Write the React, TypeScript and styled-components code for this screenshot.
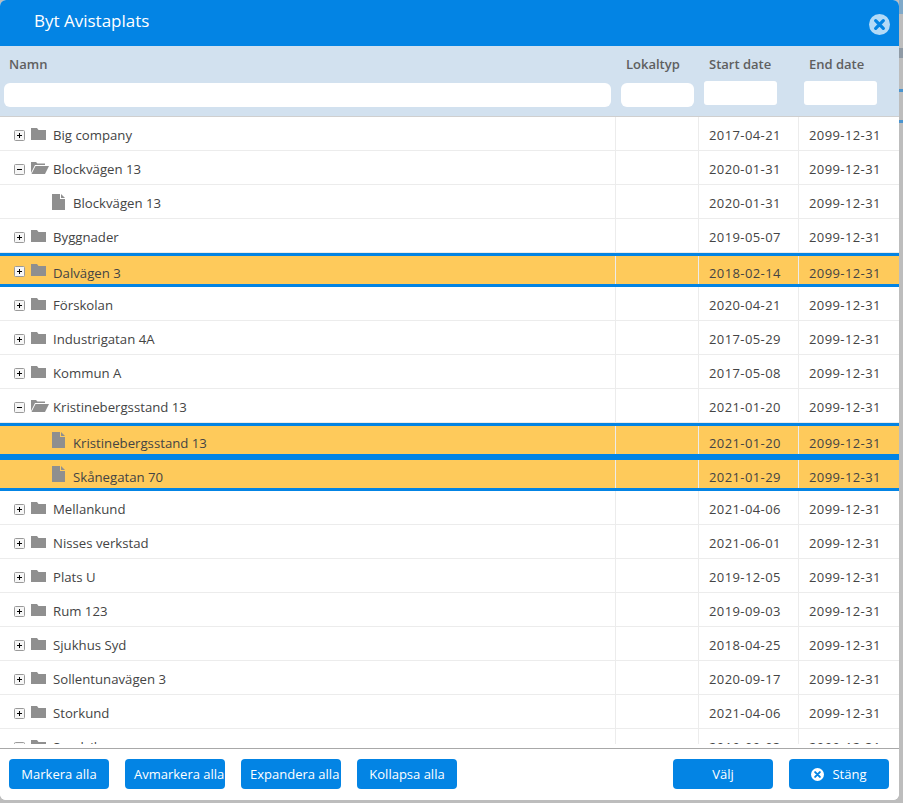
import styled, { createGlobalStyle } from "styled-components";

type Row = {
  name: string;
  start: string;
  kind: "closed" | "open" | "file";
  selected?: boolean;
};

const rows: Row[] = [
  { name: "Big company", start: "2017-04-21", kind: "closed" },
  { name: "Blockvägen 13", start: "2020-01-31", kind: "open" },
  { name: "Blockvägen 13", start: "2020-01-31", kind: "file" },
  { name: "Byggnader", start: "2019-05-07", kind: "closed" },
  { name: "Dalvägen 3", start: "2018-02-14", kind: "closed", selected: true },
  { name: "Förskolan", start: "2020-04-21", kind: "closed" },
  { name: "Industrigatan 4A", start: "2017-05-29", kind: "closed" },
  { name: "Kommun A", start: "2017-05-08", kind: "closed" },
  { name: "Kristinebergsstand 13", start: "2021-01-20", kind: "open" },
  { name: "Kristinebergsstand 13", start: "2021-01-20", kind: "file", selected: true },
  { name: "Skånegatan 70", start: "2021-01-29", kind: "file", selected: true },
  { name: "Mellankund", start: "2021-04-06", kind: "closed" },
  { name: "Nisses verkstad", start: "2021-06-01", kind: "closed" },
  { name: "Plats U", start: "2019-12-05", kind: "closed" },
  { name: "Rum 123", start: "2019-09-03", kind: "closed" },
  { name: "Sjukhus Syd", start: "2018-04-25", kind: "closed" },
  { name: "Sollentunavägen 3", start: "2020-09-17", kind: "closed" },
  { name: "Storkund", start: "2021-04-06", kind: "closed" },
  { name: "Sandviken", start: "2019-09-03", kind: "closed" },
];

const GlobalStyle = createGlobalStyle`
  html, body {
    margin: 0;
    padding: 0;
    height: 100%;
    overflow: hidden;
    background: #bdbdbd;
  }
  * {
    box-sizing: border-box;
  }
`;

// bits of the page underneath that show beside the dialog
const PageMark = styled.div<{ $top: number; $height: number; $color: string }>`
  position: fixed;
  left: 899px;
  right: 0;
  top: ${(p) => p.$top}px;
  height: ${(p) => p.$height}px;
  background: ${(p) => p.$color};
`;

const Dialog = styled.div`
  width: 899px;
  height: 800px;
  display: flex;
  flex-direction: column;
  background: #fff;
  border-radius: 6px;
  overflow: hidden;
  font-family: "Open Sans", "Noto Sans", sans-serif;
  font-size: 13px;
  color: #444;
`;

const TitleBar = styled.div`
  height: 46px;
  flex: none;
  display: flex;
  align-items: flex-start;
  justify-content: space-between;
  padding: 10px 9px 0 34px;
  background: #0384e4;
  color: #fff;
`;

const Title = styled.div`
  font-size: 17px;
  line-height: 21px;
`;

const CloseButton = styled.button`
  width: 21px;
  height: 21px;
  margin-top: 4px;
  padding: 0;
  border: 0;
  background: none;
  display: block;
`;

const FilterHeader = styled.div`
  height: 71px;
  flex: none;
  display: grid;
  grid-template-columns: 615px 83px 100px 101px;
  background: #d2e1ef;
  border-bottom: 1px solid #cfcfcf;
`;

const FilterCell = styled.div<{ $raised?: boolean; $indent?: number }>`
  padding: 9px 0 0 ${(p) => p.$indent ?? 11}px;
  display: flex;
  flex-direction: column;
  align-items: flex-start;
  gap: ${(p) => (p.$raised ? "8px" : "10px")};
`;

const ColumnLabel = styled.div`
  font-weight: 600;
  font-size: 13px;
  line-height: 18px;
  color: #5f5f5f;
`;

const FilterInput = styled.input<{ $width: number; $offset: number; $round?: boolean }>`
  width: ${(p) => p.$width}px;
  height: 24px;
  margin-left: ${(p) => p.$offset}px;
  border: 0;
  border-radius: ${(p) => (p.$round ? "6px" : "3px")};
  background: #fff;
  display: block;
`;

const RowsArea = styled.div`
  height: 627px;
  flex: none;
  overflow: hidden;
`;

const TreeRow = styled.div<{ $selected?: boolean }>`
  height: 34px;
  display: grid;
  grid-template-columns: 615px 83px 100px 101px;
  background: ${(p) => (p.$selected ? "#feca5b" : "#fff")};
  border-bottom: ${(p) => (p.$selected ? "3px solid #0384e4" : "1px solid #ececec")};
  border-top: ${(p) => (p.$selected ? "3px solid #0384e4" : "0")};
`;

const NameCell = styled.div<{ $file?: boolean; $selected?: boolean }>`
  display: flex;
  align-items: flex-start;
  padding: ${(p) => (p.$selected ? "6px" : "9px")} 0 0 ${(p) => (p.$file ? "52px" : "14px")};
  line-height: 18px;
  font-size: 13.2px;
  white-space: nowrap;
`;

const NameText = styled.span<{ $selected?: boolean }>`
  margin-top: ${(p) => (p.$selected ? "2px" : "0")};
`;

const Cell = styled.div<{ $selected?: boolean }>`
  padding: ${(p) => (p.$selected ? "8px" : "9px")} 0 0 10px;
  border-left: 1px solid #ececec;
  line-height: 18px;
  letter-spacing: 0.4px;
`;

const Toggle = styled.svg`
  width: 11px;
  height: 11px;
  flex: none;
  margin: 4px 6px 0 0;
`;

const FolderIcon = styled.svg`
  width: 18px;
  height: 12px;
  flex: none;
  margin: 2px 4px 0 0;
`;

const FileIcon = styled.svg`
  width: 13px;
  height: 16px;
  flex: none;
  margin-right: 8px;
`;

const Footer = styled.div`
  height: 52px;
  margin-top: 4px;
  flex: none;
  display: flex;
  align-items: flex-start;
  justify-content: space-between;
  padding: 10px 10px 0 9px;
  border-top: 1px solid #a8a8a8;
  background: #fff;
`;

const ButtonGroup = styled.div`
  display: flex;
  gap: 16px;
`;

const Button = styled.button`
  width: 100px;
  height: 30px;
  padding: 0 9px;
  border: 0;
  border-radius: 4px;
  background: #0384e4;
  color: #fff;
  font-family: inherit;
  font-size: 13px;
  font-weight: 400;
  text-align: center;
  white-space: nowrap;
  overflow: hidden;
`;

const ButtonIcon = styled.span`
  display: inline-block;
  margin-right: 8px;
  vertical-align: -2px;
  line-height: 0;
`;

function CircleX({ size, ring, mark }: { size: number; ring: string; mark: string }) {
  return (
    <svg width={size} height={size} viewBox="0 0 22 22" aria-hidden>
      <circle cx="11" cy="11" r="11" fill={ring} />
      <path d="M7 7l8 8M15 7l-8 8" stroke={mark} strokeWidth="3.4" strokeLinecap="round" />
    </svg>
  );
}

function RowIcon({ kind }: { kind: Row["kind"] }) {
  if (kind === "file") {
    return (
      <FileIcon viewBox="0 0 13 16" aria-hidden>
        <path d="M0 0h8v5h5v11H0z" fill="#8f8f8f" />
        <path d="M9 0l4 4H9z" fill="#8f8f8f" />
      </FileIcon>
    );
  }
  const open = kind === "open";
  return (
    <>
      <Toggle viewBox="0 0 11 11" aria-hidden>
        <rect x="0.5" y="0.5" width="10" height="10" rx="1" fill="#f6f6f6" stroke="#9a9a9a" />
        <path d={open ? "M3 5.5h5" : "M3 5.5h5M5.5 3v5"} stroke="#000" strokeWidth="1" />
      </Toggle>
      <FolderIcon viewBox="0 0 18 12" aria-hidden>
        {open ? (
          <path d="M0 11V0h5l1.500 1.500H14V3H4L0 11zM4.500 4H18L14 12H0.500z" fill="#8f8f8f" />
        ) : (
          <path d="M0 0h6l1.500 2H15V12H0z" fill="#8f8f8f" />
        )}
      </FolderIcon>
    </>
  );
}

export default function App() {
  return (
    <>
      <GlobalStyle />
      <PageMark $top={0} $height={14} $color="#7fa9c9" />
      <PageMark $top={48} $height={10} $color="#8f9aa5" />
      <PageMark $top={89} $height={3} $color="#4a94cf" />
      <PageMark $top={120} $height={3} $color="#4a94cf" />
      <Dialog>
        <TitleBar>
          <Title>Byt Avistaplats</Title>
          <CloseButton aria-label="Stäng">
            <CircleX size={21} ring="#b3daf7" mark="#0384e4" />
          </CloseButton>
        </TitleBar>
        <FilterHeader>
          <FilterCell $indent={9}>
            <ColumnLabel>Namn</ColumnLabel>
            <FilterInput $width={607} $offset={-5} $round />
          </FilterCell>
          <FilterCell>
            <ColumnLabel>Lokaltyp</ColumnLabel>
            <FilterInput $width={73} $offset={-5} $round />
          </FilterCell>
          <FilterCell $raised>
            <ColumnLabel>Start date</ColumnLabel>
            <FilterInput $width={73} $offset={-5} />
          </FilterCell>
          <FilterCell $raised>
            <ColumnLabel>End date</ColumnLabel>
            <FilterInput $width={73} $offset={-5} />
          </FilterCell>
        </FilterHeader>
        <RowsArea>
          {rows.map((row, i) => (
            <TreeRow key={i} $selected={row.selected}>
              <NameCell $file={row.kind === "file"} $selected={row.selected}>
                <RowIcon kind={row.kind} />
                <NameText $selected={row.selected}>{row.name}</NameText>
              </NameCell>
              <Cell $selected={row.selected} />
              <Cell $selected={row.selected}>{row.start}</Cell>
              <Cell $selected={row.selected}>2099-12-31</Cell>
            </TreeRow>
          ))}
        </RowsArea>
        <Footer>
          <ButtonGroup>
            <Button>Markera alla</Button>
            <Button>Avmarkera alla</Button>
            <Button>Expandera alla</Button>
            <Button>Kollapsa alla</Button>
          </ButtonGroup>
          <ButtonGroup>
            <Button>Välj</Button>
            <Button>
              <ButtonIcon>
                <CircleX size={13} ring="#fff" mark="#0384e4" />
              </ButtonIcon>
              Stäng
            </Button>
          </ButtonGroup>
        </Footer>
      </Dialog>
    </>
  );
}
